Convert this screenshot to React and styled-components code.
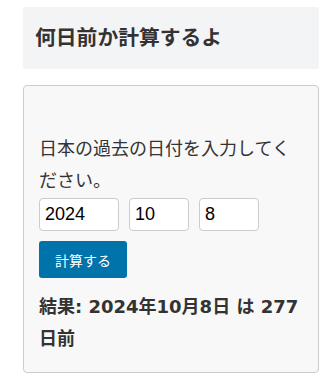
import React from "react";
import styled, { createGlobalStyle } from "styled-components";

const Global = createGlobalStyle`
  html, body { margin: 0; padding: 0; background: #fff; }
  body { font-family: "Noto Sans CJK JP", sans-serif; color: #333; }
`;

const Page = styled.div`
  width: 296px;
  padding: 7px 0 0 23px;
  display: flex;
  flex-direction: column;
  gap: 16px;
`;

const Header = styled.div`
  background: #f3f4f6;
  border-radius: 2px;
  padding: 13px 12px 17px;
`;

const Title = styled.h2`
  margin: 0;
  font-size: 20.8px;
  font-weight: 700;
  line-height: 32px;
  color: #333;
`;

const Card = styled.div`
  background: #f8f8f8;
  border: 1px solid #ccc;
  border-radius: 4px;
  padding: 45px 16px 17px 15px;
  display: flex;
  flex-direction: column;
`;

const Lead = styled.p`
  margin: 0;
  font-size: 18px;
  line-height: 32px;
  color: #333;
`;

const InputRow = styled.div`
  display: flex;
  gap: 10px;
  margin-top: 3px;
`;

const Field = styled.input`
  box-sizing: border-box;
  width: ${(p) => p.$w}px;
  height: 33px;
  border: 1px solid #ccc;
  border-radius: 4px;
  background: #fff;
  padding: 0 5px;
  font-family: "Liberation Sans", Arial, sans-serif;
  font-size: 18px;
  color: #000;
  outline: none;
`;

const Button = styled.button`
  align-self: flex-start;
  margin-top: 10px;
  height: 37px;
  padding: 0 16px;
  border: none;
  border-radius: 3px;
  background: #0073aa;
  color: #fff;
  font-family: "Noto Sans CJK JP", sans-serif;
  font-size: 14px;
  cursor: pointer;
`;

const Result = styled.p`
  margin: 13px 0 0;
  font-family: "DejaVu Sans", "Noto Sans CJK JP", sans-serif;
  font-weight: 700;
  font-size: 18px;
  line-height: 32px;
  color: #333;
`;

export default function App() {
  return (
    <>
      <Global />
      <Page>
        <Header>
          <Title>何日前か計算するよ</Title>
        </Header>
        <Card>
          <Lead>日本の過去の日付を入力してください。</Lead>
          <InputRow>
            <Field $w={80} defaultValue="2024" />
            <Field $w={60} defaultValue="10" />
            <Field $w={60} defaultValue="8" />
          </InputRow>
          <Button>計算する</Button>
          <Result>結果: 2024年10月8日 は 277 日前</Result>
        </Card>
      </Page>
    </>
  );
}
